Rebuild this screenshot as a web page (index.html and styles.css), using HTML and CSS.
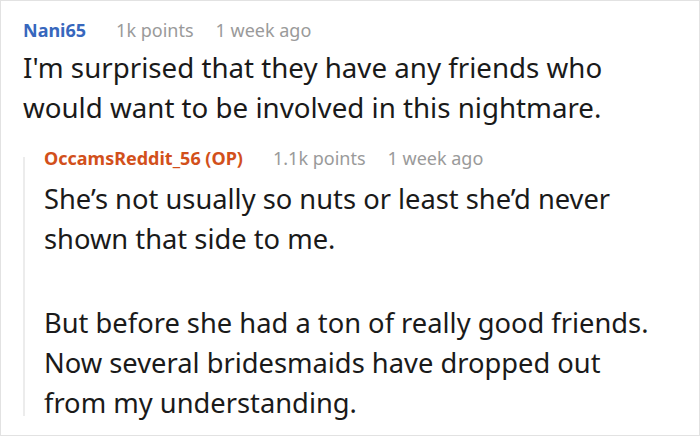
FILE: index.html
```html
<!DOCTYPE html>
<html>
<head>
<meta charset="utf-8">
<link rel="stylesheet" href="styles.css">
</head>
<body>
<div class="frame">
  <div class="comment">
    <div class="meta">
      <span class="user user-blue">Nani65</span>
      <span class="info">1k points</span>
      <span class="info">1 week ago</span>
    </div>
    <div class="body body-top">
      <p>I'm surprised that they have any friends who would want to be involved in this nightmare.</p>
    </div>
    <div class="reply">
      <div class="meta">
        <span class="user user-op">OccamsReddit_56 (OP)</span>
        <span class="info">1.1k points</span>
        <span class="info">1 week ago</span>
      </div>
      <div class="body body-reply">
        <p>She’s not usually so nuts or least she’d never<br>shown that side to me.</p>
        <p>But before she had a ton of really good friends.<br>Now several bridesmaids have dropped out<br>from my understanding.</p>
      </div>
    </div>
  </div>
</div>
</body>
</html>
```

FILE: styles.css
```css
html, body {
  margin: 0;
  padding: 0;
  background: #fff;
}
.frame {
  width: 700px;
  height: 436px;
  box-sizing: border-box;
  border: 1px solid #e2e2e2;
  overflow: hidden;
  font-family: "Noto Sans", "Open Sans", sans-serif;
  color: #1a1a1a;
}
.comment {
  padding: 15px 0 0 22px;
}
.meta {
  display: flex;
  align-items: baseline;
  gap: 22px;
  font-size: 18px;
  line-height: 28px;
}
.user {
  font-weight: 700;
  margin-right: 8px;
}
.user-blue { color: #3767bd; }
.user-op { color: #d2501b; }
.info { color: #9a9a9a; }
.body {
  font-size: 27.7px;
  line-height: 40px;
}
.body p {
  margin: 0 0 44px;
  white-space: nowrap;
}
.body-top p { white-space: normal; }
.body p:last-child { margin-bottom: 0; }
.body-top {
  margin-top: 3px;
  max-width: 640px;
}
.reply {
  position: relative;
  margin-top: 17px;
  padding-left: 21px;
  height: 278px;
  overflow: hidden;
}
.reply::before {
  content: "";
  position: absolute;
  left: 0;
  top: 13px;
  bottom: 6px;
  width: 2px;
  background: #ececec;
}
.body-reply {
  margin-top: 7px;
  font-size: 27.3px;
}
```
